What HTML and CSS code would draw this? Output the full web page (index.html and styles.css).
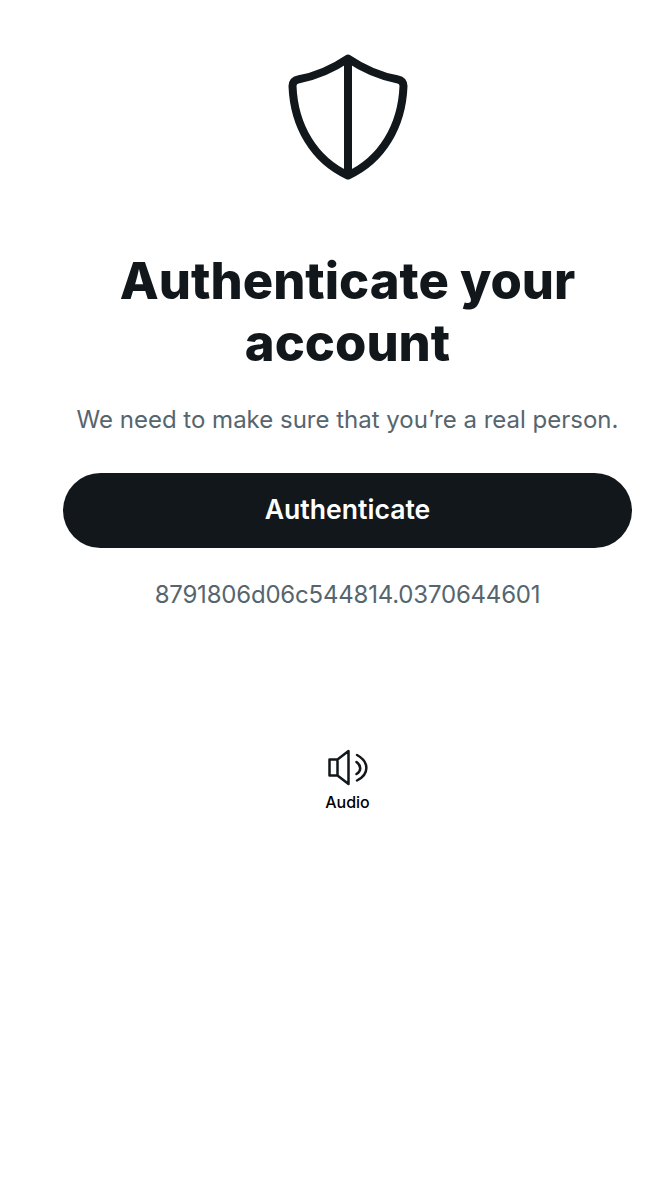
FILE: index.html
```html
<!DOCTYPE html>
<html lang="en">
<head>
<meta charset="utf-8">
<title>Authenticate your account</title>
<link rel="stylesheet" href="styles.css">
</head>
<body>
<main class="page">
  <svg class="shield" viewBox="0 0 120 126" aria-hidden="true">
    <path class="shield-line" d="M60 4.500 C46 14 29 22 10 25.500 C6.500 26 4.500 28.500 4.500 32 C6 72 26 106 60 121.500 C94 106 114 72 115.500 32 C115.500 28.500 113.500 26 110 25.500 C91 22 74 14 60 4.500 Z M60 4.500 V121.500"/>
  </svg>
  <h1 class="title">Authenticate your account</h1>
  <p class="subtitle">We need to make sure that you’re a real person.</p>
  <button class="primary" type="button">Authenticate</button>
  <p class="ref">8791806d06c544814.0370644601</p>
  <div class="audio">
    <svg class="audio-icon" viewBox="0 0 40 37" aria-hidden="true">
      <path class="audio-line" d="M1.500 10.500 H9.500 L20.500 2 V35 L9.500 26.500 H1.500 Z M9.500 10.500 V26.500"/>
      <path class="audio-line" d="M28.500 13 C33.500 16.500 33.500 22 28.500 25 M29 6 C41.500 13 41.500 25 29 31.500"/>
    </svg>
    <span class="audio-label">Audio</span>
  </div>
</main>
</body>
</html>
```
FILE: styles.css
```css
html, body {
  margin: 0;
  background: #fff;
}
.page {
  box-sizing: border-box;
  width: 652px;
  height: 1200px;
  padding: 54px 20px 0 63px;
  display: flex;
  flex-direction: column;
  align-items: center;
  font-family: Inter, "Liberation Sans", sans-serif;
  color: #11171a;
}
.shield {
  width: 120px;
  height: 126px;
  display: block;
}
.shield-line {
  fill: none;
  stroke: #11171a;
  stroke-width: 8;
  stroke-linejoin: round;
}
.title {
  margin: 70px 0 0;
  width: 500px;
  text-align: center;
  font-size: 50.700px;
  line-height: 62px;
  font-weight: 800;
}
.subtitle {
  margin: 28px 0 0;
  font-size: 24px;
  line-height: 36px;
  color: #56656e;
  white-space: nowrap;
}
.primary {
  margin: 35px 0 0;
  padding: 0 0 4px;
  width: 569px;
  height: 75px;
  border: 0;
  border-radius: 38px;
  background: #11171a;
  color: #fff;
  font-family: inherit;
  font-size: 26.600px;
  font-weight: 600;
}
.ref {
  margin: 29px 0 0;
  font-size: 24px;
  line-height: 36px;
  letter-spacing: -0.200px;
  color: #56656e;
}
.audio {
  margin-top: 136px;
  display: flex;
  flex-direction: column;
  align-items: center;
  gap: 5px;
}
.audio-icon {
  width: 40px;
  height: 37px;
  display: block;
}
.audio-line {
  fill: none;
  stroke: #11171a;
  stroke-width: 2.500;
  stroke-linejoin: round;
  stroke-linecap: round;
}
.audio-label {
  font-size: 16px;
  line-height: 22px;
  font-weight: 500;
  color: #000;
}
```
